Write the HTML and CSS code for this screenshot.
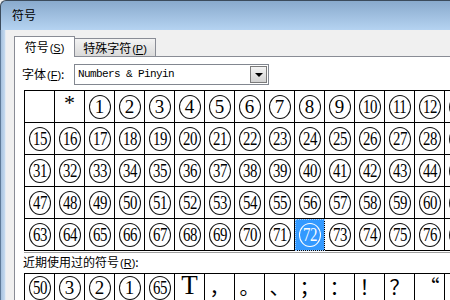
FILE: index.html
```html
<!DOCTYPE html>
<html>
<head>
    <meta charset="utf-8">
    <meta name="viewport" content="width=device-width">
    <title>符号</title>
    <link rel="stylesheet" href="styles.css">
</head>

<body>
    <div class="window">
        <div class="titlebar">符号</div>
        <div class="frame">
            <div class="frame__edge"></div>
            <div class="dialog">
                <div class="tabs">
                    <div class="tab tab--active">符号<span class="key">(<u>S</u>)</span></div>
                    <div class="tab tab--other">特殊字符<span class="key">(<u>P</u>)</span></div>
                </div>
                <div class="panel">
                    <div class="font-row">
                        <span class="label label--font">字体<span class="key">(<u>F</u>)</span>:</span>
                        <div class="select">
                            <span class="select__value">Numbers &amp; Pinyin</span>
                            <span class="select__button"><span class="select__arrow"></span></span>
                        </div>
                    </div>

                    <div class="symbols">
                        <!-- row 1 -->
                        <span></span>
                        <span class="star">*</span>
                        <span><b class="one"><i>1</i></b></span>
                        <span><b class="one"><i>2</i></b></span>
                        <span><b class="one"><i>3</i></b></span>
                        <span><b class="one"><i>4</i></b></span>
                        <span><b class="one"><i>5</i></b></span>
                        <span><b class="one"><i>6</i></b></span>
                        <span><b class="one"><i>7</i></b></span>
                        <span><b class="one"><i>8</i></b></span>
                        <span><b class="one"><i>9</i></b></span>
                        <span><b><i>10</i></b></span>
                        <span><b><i>11</i></b></span>
                        <span><b><i>12</i></b></span>
                        <span><b></b></span>
                        <span><b></b></span>
                        <!-- row 2 -->
                        <span><b><i>15</i></b></span>
                        <span><b><i>16</i></b></span>
                        <span><b><i>17</i></b></span>
                        <span><b><i>18</i></b></span>
                        <span><b><i>19</i></b></span>
                        <span><b><i>20</i></b></span>
                        <span><b><i>21</i></b></span>
                        <span><b><i>22</i></b></span>
                        <span><b><i>23</i></b></span>
                        <span><b><i>24</i></b></span>
                        <span><b><i>25</i></b></span>
                        <span><b><i>26</i></b></span>
                        <span><b><i>27</i></b></span>
                        <span><b><i>28</i></b></span>
                        <span><b></b></span>
                        <span><b></b></span>
                        <!-- row 3 -->
                        <span><b><i>31</i></b></span>
                        <span><b><i>32</i></b></span>
                        <span><b><i>33</i></b></span>
                        <span><b><i>34</i></b></span>
                        <span><b><i>35</i></b></span>
                        <span><b><i>36</i></b></span>
                        <span><b><i>37</i></b></span>
                        <span><b><i>38</i></b></span>
                        <span><b><i>39</i></b></span>
                        <span><b><i>40</i></b></span>
                        <span><b><i>41</i></b></span>
                        <span><b><i>42</i></b></span>
                        <span><b><i>43</i></b></span>
                        <span><b><i>44</i></b></span>
                        <span><b></b></span>
                        <span><b></b></span>
                        <!-- row 4 -->
                        <span><b><i>47</i></b></span>
                        <span><b><i>48</i></b></span>
                        <span><b><i>49</i></b></span>
                        <span><b><i>50</i></b></span>
                        <span><b><i>51</i></b></span>
                        <span><b><i>52</i></b></span>
                        <span><b><i>53</i></b></span>
                        <span><b><i>54</i></b></span>
                        <span><b><i>55</i></b></span>
                        <span><b><i>56</i></b></span>
                        <span><b><i>57</i></b></span>
                        <span><b><i>58</i></b></span>
                        <span><b><i>59</i></b></span>
                        <span><b><i>60</i></b></span>
                        <span><b></b></span>
                        <span><b></b></span>
                        <!-- row 5 -->
                        <span><b><i>63</i></b></span>
                        <span><b><i>64</i></b></span>
                        <span><b><i>65</i></b></span>
                        <span><b><i>66</i></b></span>
                        <span><b><i>67</i></b></span>
                        <span><b><i>68</i></b></span>
                        <span><b><i>69</i></b></span>
                        <span><b><i>70</i></b></span>
                        <span><b><i>71</i></b></span>
                        <span class="selected"><b><i>72</i></b></span>
                        <span><b><i>73</i></b></span>
                        <span><b><i>74</i></b></span>
                        <span><b><i>75</i></b></span>
                        <span><b><i>76</i></b></span>
                        <span><b></b></span>
                        <span><b></b></span>
                    </div>

                    <div class="label label--recent">近期使用过的符号<span class="key">(<u>R</u>)</span>:</div>

                    <div class="symbols symbols--recent">
                        <span><b><i>50</i></b></span>
                        <span><b class="one"><i>3</i></b></span>
                        <span><b class="one"><i>2</i></b></span>
                        <span><b class="one"><i>1</i></b></span>
                        <span><b><i>65</i></b></span>
                        <span class="letter">T</span>
                        <span class="punct">，</span>
                        <span class="punct">。</span>
                        <span class="punct">、</span>
                        <span class="punct">；</span>
                        <span class="punct">：</span>
                        <span class="punct">！</span>
                        <span class="punct">？</span>
                        <span class="punct">“</span>
                        <span></span>
                        <span></span>
                    </div>
                </div>
            </div>
        </div>
    </div>
</body>
</html>
```

FILE: styles.css
```css
* {
    box-sizing: border-box;
}

html, body {
    margin: 0;
    padding: 0;
}

body {
    width: 450px;
    height: 300px;
    overflow: hidden;
    font: 12px/1.2 "Noto Sans CJK SC", sans-serif;
    color: #000;
    background: #f0f0f0;
}

.window {
    display: flex;
    flex-direction: column;
    height: 300px;
}

.titlebar {
    flex: none;
    height: 30px;
    padding: 6px 0 0 11px;
    line-height: 16px;
    background: linear-gradient(#89aacd, #b5d3f1);
    border-top: 1px solid #3c4b5c;
    border-left: 1px solid #3c4b5c;
    border-top-left-radius: 6px;
}

.frame {
    flex: 1;
    display: flex;
    min-height: 0;
}

.frame__edge {
    flex: none;
    width: 6px;
    background: linear-gradient(to right, #a6c1de, #c6dbf0);
    border-left: 1px solid #5f7b99;
    border-right: 1px solid #e4ebf3;
}

.dialog {
    flex: 1;
    min-width: 0;
    display: flex;
    flex-direction: column;
    padding: 6px 0 0 8px;
    background: #f0f0f0;
}

/* tabs */
.tabs {
    display: flex;
    align-items: flex-end;
    height: 20px;
    position: relative;
    z-index: 1;
}

.tab {
    height: 18px;
    border: 1px solid #898c95;
    border-bottom: none;
    text-align: center;
    line-height: 16px;
    white-space: nowrap;
}

.tab--active {
    width: 61px;
    height: 21px;
    margin-bottom: -1px;
    padding-top: 2px;
    background: #fff;
}

.tab--other {
    width: 82px;
    margin-left: -1px;
    padding-top: 1px;
    background: linear-gradient(#f3f3f3, #dadada);
}

.key {
    font-family: "Liberation Sans", sans-serif;
    font-size: 11px;
    margin-left: 1px;
}

.panel {
    flex: 1;
    min-height: 0;
    overflow: hidden;
    padding: 7px 0 0 7px;
    background: #fff;
    border-top: 1px solid #898c95;
    border-left: 1px solid #898c95;
}

/* font chooser */
.font-row {
    display: flex;
    align-items: center;
    height: 21px;
}

.label--font {
    width: 52px;
}

.select {
    display: flex;
    align-items: center;
    width: 195px;
    height: 21px;
    padding: 1px;
    border: 1px solid #828790;
}

.select__value {
    flex: 1;
    padding-left: 2px;
    font-family: "Liberation Mono", monospace;
    font-size: 11px;
    letter-spacing: -0.6px;
}

.select__button {
    display: flex;
    align-items: center;
    justify-content: center;
    width: 17px;
    height: 17px;
    border: 1px solid #7b7b7b;
    background: linear-gradient(#f4f4f4, #d2d2d2);
}

.select__arrow {
    width: 0;
    height: 0;
    border-left: 4px solid transparent;
    border-right: 4px solid transparent;
    border-top: 4px solid #000;
    margin-top: 1px;
}

/* symbol table */
.symbols {
    display: grid;
    grid-template-columns: repeat(16, 30px);
    grid-auto-rows: 32px;
    width: max-content;
    margin: 5px 0 0 2px;
    border-top: 1px solid #000;
    border-left: 1px solid #000;
    box-shadow: 0 1px 0 #fff, 0 2px 0 #a0a0a0;
}

.symbols > span {
    display: flex;
    align-items: center;
    justify-content: center;
    border-right: 1px solid #000;
    border-bottom: 1px solid #000;
    font-family: "Liberation Serif", serif;
}

.symbols b {
    display: flex;
    align-items: center;
    justify-content: center;
    width: 22px;
    height: 24px;
    border: 1px solid #111;
    border-radius: 50%;
    font-weight: normal;
    font-size: 19px;
    line-height: 1;
}

.symbols i {
    display: inline-block;
    font-style: normal;
    letter-spacing: -0.5px;
    transform: scaleX(.78);
}

.symbols .one i {
    letter-spacing: 0;
    transform: none;
}

.symbols .star {
    align-items: flex-start;
    font-size: 22px;
    line-height: 1;
    padding-top: 1px;
}

.symbols .selected {
    background: #3399ff;
    color: #fff;
    outline: 1px dotted #a9d2ff;
    outline-offset: -1px;
}

.symbols .selected b {
    border-color: #fff;
}

.label--recent {
    margin: 4px 0 0 1px;
    line-height: 14px;
}

/* recent row is cut by the window edge */
.symbols--recent {
    margin-top: 3px;
    grid-auto-rows: 28px;
    box-shadow: none;
}

.symbols .letter {
    align-items: flex-end;
    font-size: 27px;
    line-height: normal;
}

.symbols .punct {
    align-items: flex-end;
    font-family: "Noto Sans CJK SC", sans-serif;
    font-size: 20px;
    line-height: normal;
}
```
